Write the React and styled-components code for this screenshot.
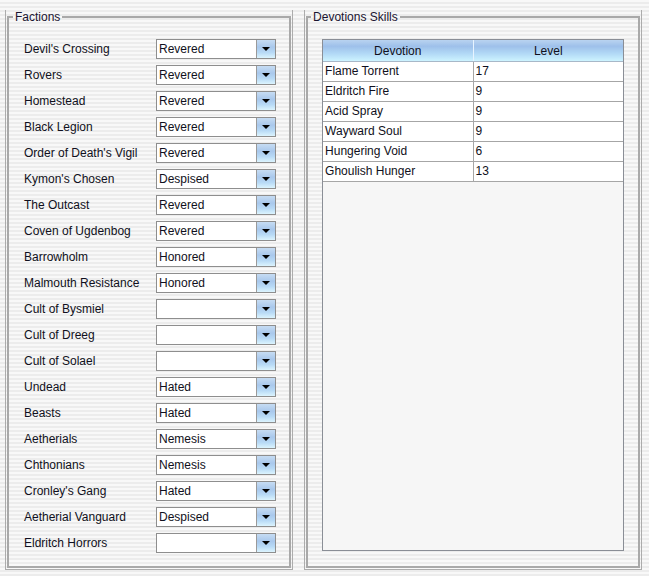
import React from 'react';
import styled, { createGlobalStyle } from 'styled-components';

const GlobalStyle = createGlobalStyle`
  html, body {
    margin: 0;
    padding: 0;
  }
  body {
    font-family: "Liberation Sans", Arial, sans-serif;
    font-size: 12px;
    color: #101020;
    background: repeating-linear-gradient(to bottom, #f8f8f8 0 2px, #ececec 2px 4px);
  }
`;

const factions = [
  ["Devil's Crossing", 'Revered'],
  ['Rovers', 'Revered'],
  ['Homestead', 'Revered'],
  ['Black Legion', 'Revered'],
  ["Order of Death's Vigil", 'Revered'],
  ["Kymon's Chosen", 'Despised'],
  ['The Outcast', 'Revered'],
  ['Coven of Ugdenbog', 'Revered'],
  ['Barrowholm', 'Honored'],
  ['Malmouth Resistance', 'Honored'],
  ['Cult of Bysmiel', ''],
  ['Cult of Dreeg', ''],
  ['Cult of Solael', ''],
  ['Undead', 'Hated'],
  ['Beasts', 'Hated'],
  ['Aetherials', 'Nemesis'],
  ['Chthonians', 'Nemesis'],
  ["Cronley's Gang", 'Hated'],
  ['Aetherial Vanguard', 'Despised'],
  ['Eldritch Horrors', ''],
];

const devotions = [
  ['Flame Torrent', '17'],
  ['Eldritch Fire', '9'],
  ['Acid Spray', '9'],
  ['Wayward Soul', '9'],
  ['Hungering Void', '6'],
  ['Ghoulish Hunger', '13'],
];

const Page = styled.div`
  display: flex;
  gap: 11px;
  height: 576px;
  box-sizing: border-box;
  padding: 10px 7px 6px 5px;
`;

const Frame = styled.div`
  display: flex;
  width: ${({ width }) => width}px;
  box-sizing: border-box;
  border: 1px solid #acacac;
  border-top: none;
  padding: 0 1px 1px 1px;
`;

const Group = styled.fieldset`
  flex: 1;
  display: flex;
  flex-direction: column;
  margin: 0;
  min-width: 0;
  border: 2px solid #a9a9a9;
  padding: ${({ pad }) => pad};
`;

// legend sits at the content edge, so pull it back toward the corner
const Title = styled.legend`
  margin-left: -11px;
  padding: 0 2px;
  line-height: 14px;
  font-size: 12px;
  color: #1a1430;
`;

const FactionList = styled.div`
  display: grid;
  grid-template-columns: 132px 120px;
  row-gap: 6px;
`;

const Label = styled.span`
  line-height: 20px;
  white-space: nowrap;
`;

const Combo = styled.div`
  display: flex;
  height: 20px;
  box-sizing: border-box;
  border: 1px solid #8e8e8e;
  background: #fff;
`;

const ComboText = styled.span`
  flex: 1;
  padding-left: 2px;
  line-height: 18px;
`;

const ComboButton = styled.div`
  width: 18px;
  display: flex;
  align-items: center;
  justify-content: center;
  border-left: 1px solid #9a9a9a;
  background: linear-gradient(#c6dcf3 0%, #a9c8ec 40%, #b8daf6 70%, #dcf4fe 100%);
`;

const Arrow = styled.span`
  width: 0;
  height: 0;
  margin-top: -1px;
  border-left: 4px solid transparent;
  border-right: 4px solid transparent;
  border-top: 4px solid #000;
`;

const TableView = styled.div`
  flex: 1;
  border: 1px solid #8a8e96;
  background: #f6f6f6;
`;

const Table = styled.table`
  width: 100%;
  border-collapse: collapse;
  table-layout: fixed;
`;

const HeadCell = styled.th`
  height: 21px;
  padding: 0;
  font-weight: normal;
  font-size: 12px;
  text-align: center;
  color: #101020;
  border-left: 1px solid #e8f4ff;
  border-bottom: 1px solid #a8b8c8;
  background: linear-gradient(#b9d3f0 0%, #9ec0ea 30%, #b2d9f6 65%, #cdf3ff 100%);
  &:first-child {
    border-left: none;
  }
`;

const Cell = styled.td`
  height: 19px;
  padding: 0 0 0 2px;
  line-height: 19px;
  background: #fff;
  border: 1px solid #a6a6a6;
  border-top: none;
  &:first-child {
    border-left: none;
  }
  &:last-child {
    border-right: none;
  }
`;

const FactionCombo = ({ value }) => (
  <Combo>
    <ComboText>{value}</ComboText>
    <ComboButton>
      <Arrow />
    </ComboButton>
  </Combo>
);

const App = () => (
  <>
    <GlobalStyle />
    <Page>
      <Frame width={289}>
        <Group pad="15px 10px 14px 15px">
          <Title>Factions</Title>
          <FactionList>
            {factions.map(([name, standing]) => (
              <React.Fragment key={name}>
                <Label>{name}</Label>
                <FactionCombo value={standing} />
              </React.Fragment>
            ))}
          </FactionList>
        </Group>
      </Frame>
      <Frame width={339}>
        <Group pad="15px 14px 15px 14px">
          <Title>Devotions Skills</Title>
          <TableView>
            <Table>
              <thead>
                <tr>
                  <HeadCell>Devotion</HeadCell>
                  <HeadCell>Level</HeadCell>
                </tr>
              </thead>
              <tbody>
                {devotions.map(([name, level]) => (
                  <tr key={name}>
                    <Cell>{name}</Cell>
                    <Cell>{level}</Cell>
                  </tr>
                ))}
              </tbody>
            </Table>
          </TableView>
        </Group>
      </Frame>
    </Page>
  </>
);

export default App;
